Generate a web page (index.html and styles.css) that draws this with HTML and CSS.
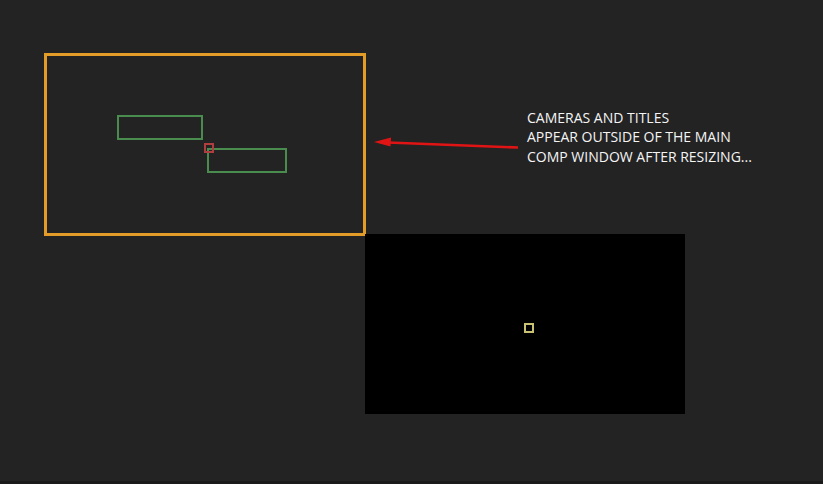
FILE: index.html
```html
<!DOCTYPE html>
<html lang="en">
<head>
  <meta charset="UTF-8">
  <title>Comp Window</title>
  <link rel="stylesheet" href="styles.css">
</head>
<body>
  <div class="canvas">
    <!-- main comp window -->
    <div class="comp-frame"></div>
    <div class="title-box title-a"></div>
    <div class="title-box title-b"></div>
    <div class="cam-marker"></div>

    <!-- resized output -->
    <div class="output">
      <div class="out-marker"></div>
    </div>

    <svg class="arrow" width="823" height="484" viewBox="0 0 823 484">
      <line x1="518" y1="147.5" x2="388" y2="142.5" stroke="#e01414" stroke-width="2.6" />
      <polygon points="374,142 391,137.5 390.5,146.5" fill="#e01414" />
    </svg>

    <div class="note">
      <p>CAMERAS AND TITLES</p>
      <p>APPEAR OUTSIDE OF THE MAIN</p>
      <p>COMP WINDOW AFTER RESIZING...</p>
    </div>
  </div>
</body>
</html>
```

FILE: styles.css
```css
html, body {
  margin: 0;
  padding: 0;
  background: #232323;
}

.canvas {
  position: relative;
  width: 823px;
  height: 484px;
  overflow: hidden;
  background: #232323;
  border-bottom: 3px solid #1a1a1a;
  box-sizing: border-box;
}

.comp-frame {
  position: absolute;
  left: 44px;
  top: 53px;
  width: 322px;
  height: 183px;
  border: 3px solid #e39c28;
  box-sizing: border-box;
}

.title-box {
  position: absolute;
  height: 25px;
  border: 2px solid #4a8c4d;
  box-sizing: border-box;
}

.title-a {
  left: 117px;
  top: 115px;
  width: 86px;
}

.title-b {
  left: 207px;
  top: 148px;
  width: 80px;
}

.cam-marker {
  position: absolute;
  left: 204px;
  top: 143px;
  width: 10px;
  height: 10px;
  border: 2px solid #b03e3e;
  box-sizing: border-box;
}

.output {
  position: absolute;
  left: 365px;
  top: 234px;
  width: 320px;
  height: 180px;
  background: #000;
}

.out-marker {
  position: absolute;
  left: 159px;
  top: 89px;
  width: 10px;
  height: 10px;
  border: 2px solid #c9c274;
  box-sizing: border-box;
}

.arrow {
  position: absolute;
  left: 0;
  top: 0;
}

.note {
  position: absolute;
  left: 527px;
  top: 108px;
  font-family: "Open Sans", sans-serif;
  font-size: 14px;
  line-height: 19.3px;
  color: #f5f5f5;
}

.note p {
  margin: 0;
}
```
